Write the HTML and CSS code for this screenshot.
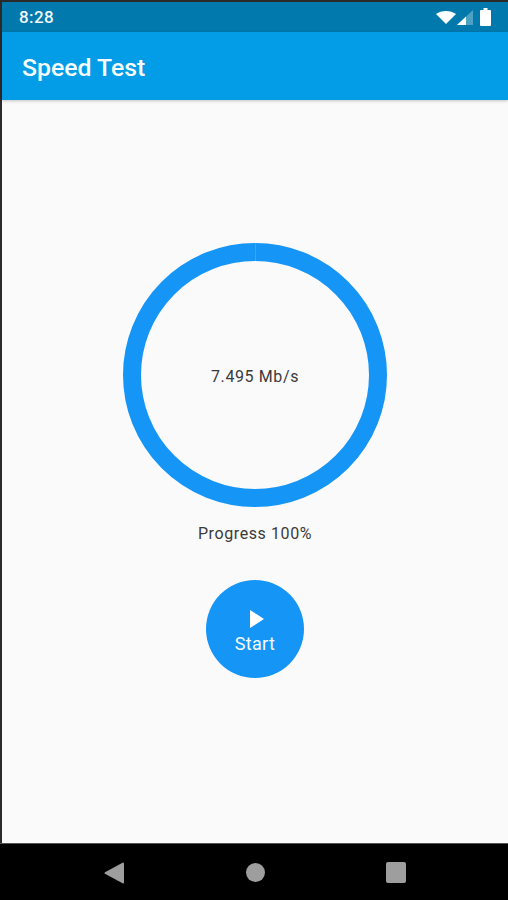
FILE: index.html
```html
<!DOCTYPE html>
<html lang="en">
<head>
<meta charset="utf-8">
<title>Speed Test</title>
<link rel="stylesheet" href="styles.css">
</head>
<body>
<div class="phone">
  <header class="status-bar">
    <span class="clock">8:28</span>
    <div class="status-icons">
      <svg class="wifi" width="20" height="13" viewBox="0 0 20 13"><path d="M0 3C2.800 1 6.200 0 10 0s7.200 1 10 3L10 13z" fill="#fff"/></svg>
      <svg class="signal" width="16" height="15" viewBox="0 0 16 15"><path d="M0 15 16 0v15z" fill="#fff" opacity=".3"/><path d="M0 15 9 6.600V15z" fill="#fff"/></svg>
      <svg class="battery" width="11" height="18" viewBox="0 0 11 18"><path d="M3.500 0h4v2H10a1 1 0 0 1 1 1v14a1 1 0 0 1-1 1H1a1 1 0 0 1-1-1V3a1 1 0 0 1 1-1h2.500z" fill="#fff"/></svg>
    </div>
  </header>
  <div class="app-bar"><h1 class="title">Speed Test</h1></div>
  <main class="content">
    <div class="gauge"><span class="speed">7.495 Mb/s</span></div>
    <p class="progress">Progress 100%</p>
    <button class="start" type="button">
      <svg width="14" height="18" viewBox="0 0 14 18"><path d="M0 0l14 9-14 9z" fill="#fff"/></svg>
      <span>Start</span>
    </button>
  </main>
  <nav class="nav-bar">
    <svg class="back" width="20" height="22" viewBox="0 0 20 22"><path d="M19 .5a1 1 0 0 1 1 1v19a1 1 0 0 1-1 1L1 11.800a1 1 0 0 1 0-1.600z" fill="#9e9e9e"/></svg>
    <span class="home"></span>
    <span class="recent"></span>
  </nav>
</div>
</body>
</html>
```

FILE: styles.css
```css
* { box-sizing: border-box; }

html, body {
  margin: 0;
  height: 100%;
  overflow: hidden;
}

body {
  background: #2a2a2a;
  font-family: Roboto, "Liberation Sans", sans-serif;
}

.phone {
  display: flex;
  flex-direction: column;
  height: 900px;
  padding: 2px 0 0 2px;
}

.status-bar {
  flex: none;
  height: 30px;
  display: flex;
  align-items: center;
  justify-content: space-between;
  padding: 0 17px 0 17px;
  background: #0179ad;
  color: #f2f8fb;
}

.clock {
  font-size: 17px;
  font-weight: 500;
  letter-spacing: .4px;
}

.status-icons {
  display: flex;
  align-items: center;
}

.signal {
  margin-left: 1px;
}

.battery {
  margin-left: 7px;
}

.app-bar {
  flex: none;
  height: 68px;
  display: flex;
  align-items: center;
  padding: 2px 0 0 20px;
  background: #029de6;
  position: relative;
  box-shadow: 0 1px 3px rgba(0, 0, 0, .22);
}

.title {
  margin: 0;
  font-size: 24.800px;
  font-weight: 500;
  color: #f7fcfe;
}

.content {
  flex: 1;
  display: flex;
  flex-direction: column;
  align-items: center;
  padding-top: 143px;
  background: #fafafa;
}

.gauge {
  position: relative;
  width: 264px;
  height: 264px;
  display: flex;
  align-items: center;
  justify-content: center;
  padding-top: 2px;
  border: 18px solid #1595f6;
  border-radius: 50%;
}

.gauge::before {
  content: "";
  position: absolute;
  top: -18px;
  left: 50%;
  width: 1px;
  height: 18px;
  background: #3aa6f7;
}

.speed {
  font-size: 16px;
  letter-spacing: .6px;
  color: #3a3a3a;
}

.progress {
  margin: 17px 0 0;
  font-size: 16px;
  line-height: 19px;
  letter-spacing: .6px;
  color: #3a3a3a;
}

.start {
  margin-top: 37px;
  width: 98px;
  height: 98px;
  display: flex;
  flex-direction: column;
  align-items: center;
  justify-content: center;
  gap: 5px;
  padding: 5px 0 0;
  border: 0;
  border-radius: 50%;
  background: #1595f6;
  color: #f5fbff;
  font: 400 18px Roboto, "Liberation Sans", sans-serif;
  letter-spacing: .3px;
}

.start svg {
  margin-left: 4px;
}

.nav-bar {
  flex: none;
  height: 57px;
  display: flex;
  align-items: center;
  background: #000;
  margin-left: -2px;
  padding: 1px 0 0 104px;
  border-top: 1px solid #555;
}

.home {
  width: 19px;
  height: 19px;
  margin-left: 122px;
  border-radius: 50%;
  background: #9e9e9e;
}

.recent {
  width: 20px;
  height: 21px;
  margin-left: 121px;
  border-radius: 2px;
  background: #9e9e9e;
}
```
